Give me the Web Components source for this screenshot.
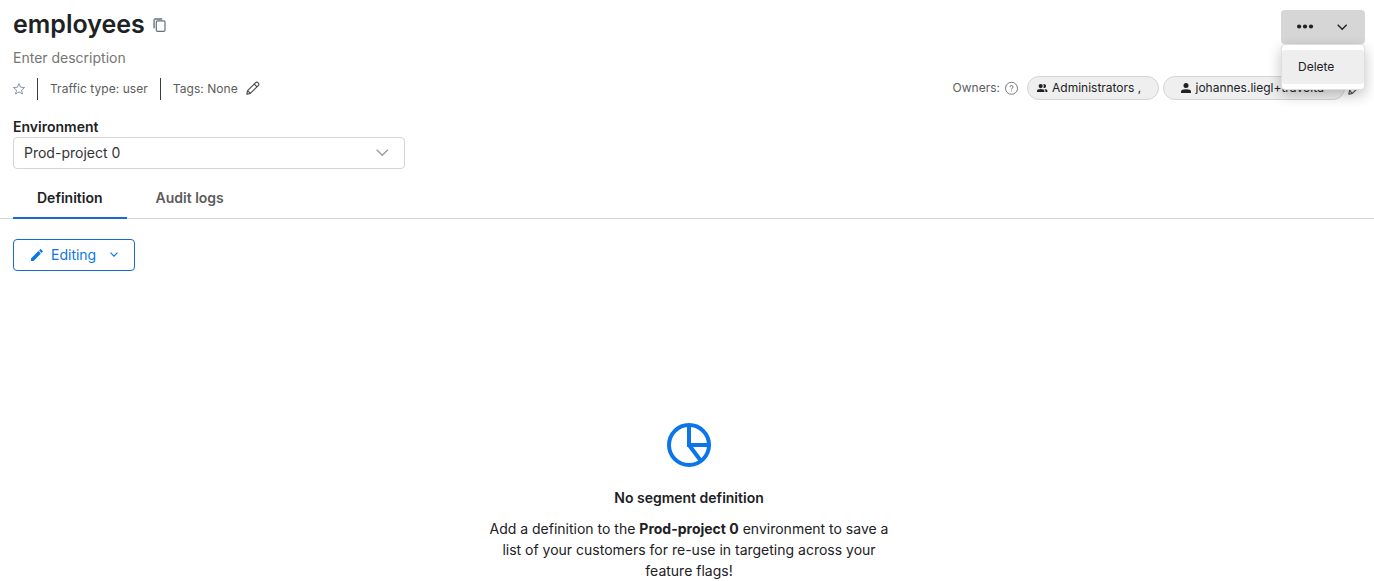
<!DOCTYPE html>
<html lang="en">
<head>
<meta charset="utf-8">
<title>employees</title>
<style>
body{margin:0;background:#fff;font-family:Inter,"Liberation Sans",sans-serif;color:#202124;overflow:hidden}
</style>
</head>
<body>
<segment-page></segment-page>
<script>
const define = (name, html) => customElements.define(name, class extends HTMLElement {
  constructor() {
    super();
    const t = document.createElement('template');
    t.innerHTML = html;
    this.attachShadow({mode: 'open'}).append(t.content.cloneNode(true));
  }
});

const icons = {
  copy: '<g fill="none" stroke="#5f7080" stroke-width="1.2"><path d="M1.1 10.3V2.6Q1.1 1 2.7 1H9.2" opacity=".75" stroke-width="1.8"/><rect x="3.3" y="2.8" width="8.7" height="10.6" rx="1.4"/></g>',
  star: '<path d="M7 1.6 8.5 5.2 12.6 5.5 9.5 8.1 10.5 12 7 9.9 3.5 12 4.5 8.1 1.4 5.5 5.5 5.2Z" fill="none" stroke="#8994ab" stroke-width="1" stroke-linejoin="round"/>',
  pencil: '<path d="M.8 13.2 1.6 9.6 9.4 1.8Q10.8.4 12.2 1.8 13.6 3.2 12.2 4.6L4.4 12.4ZM8.2 3 11 5.8M1.6 9.6 4.4 12.4" fill="none" stroke="#4d4d4d" stroke-width="1.15" stroke-linejoin="round"/>',
  help: '<circle cx="6.5" cy="7.3" r="6" fill="none" stroke="#6b6b6b" stroke-width=".9"/><path d="M5 6Q5 4.5 6.5 4.5T8 5.9Q8 6.7 7.2 7.2 6.5 7.6 6.5 8.5M6.5 9.5V10.4" fill="none" stroke="#6b6b6b" stroke-width=".9"/>',
  group: '<path d="M3.7 0A2.1 2.1 0 1 1 3.7 4.2 2.1 2.1 0 1 1 3.7 0ZM0 8V6.9Q0 5 3.7 5T7.4 6.9V8ZM6.4.2A2 2 0 1 1 6.4 4Q7.2 2.1 6.4.2ZM7.2 5.1Q10.4 5.3 10.4 6.9V8H8.4V6.9Q8.4 5.8 7.2 5.1Z" fill="#202124"/>',
  person: '<circle cx="5" cy="2.5" r="2.5" fill="#202124"/><path d="M0 10V8.5Q0 6.2 5 6.2T10 8.5V10Z" fill="#202124"/>',
  dots: '<g fill="#202124"><circle cx="2.1" cy="2.5" r="2.1"/><circle cx="8" cy="2.5" r="2.1"/><circle cx="14" cy="2.5" r="2.1"/></g>',
  chevron: '<path d="M.7.8 5.2 5.3 9.7.8" fill="none" stroke="#202124" stroke-width="1.4"/>',
  select: '<path d="M.7.7 6.3 6.3 11.9.7" fill="none" stroke="#9a9fa4" stroke-width="1.5"/>',
  small: '<path d="M.5.6 4 4.1 7.5.6" fill="none" stroke="#0b75ea" stroke-width="1.2"/>',
  edit: '<path d="M0 12V9.5L7.4 2.1 9.9 4.6 2.5 12ZM8.1 1.4 9.2.3Q9.6-.1 10 .3L11.7 2Q12.1 2.4 11.7 2.8L10.6 3.9Z" fill="#0b75ea"/>',
  pie: '<g fill="none" stroke="#0b75ea" stroke-width="4"><circle cx="22" cy="22" r="20"/><path d="M22 2V22H42M22 22 34 38"/></g>'
};
customElements.define('ui-icon', class extends HTMLElement {
  constructor() { super(); this.attachShadow({mode: 'open'}); }
  connectedCallback() {
    const [w, h] = this.getAttribute('size').split(' ');
    this.shadowRoot.innerHTML = `<style>:host{display:block;flex:none}svg{display:block;overflow:visible}</style><svg width="${w}" height="${h}" viewBox="0 0 ${w} ${h}">${icons[this.getAttribute('name')]}</svg>`;
  }
});

define('owner-pill', `<style>
:host{display:flex;box-sizing:border-box;height:24px;border:1px solid #d5d5d5;border-radius:12px;background:#efefef;align-items:center;color:#202124;font-size:12px;line-height:22px;white-space:pre}
</style><slot></slot>`);

define('action-menu', `<style>
:host{display:block;position:relative;width:84px;height:34px}
.btn{display:flex;box-sizing:border-box;height:34px;align-items:center;background:#d6d6d6;border-radius:4px;padding:0 18px 1px 16px;justify-content:space-between}
.menu{position:absolute;z-index:5;top:34px;left:0;box-sizing:border-box;width:84px;height:46px;border:1px solid #dedede;border-radius:4px;background:#fff;padding:5px 0;box-shadow:0 5px 14px rgba(0,0,0,.24)}
.item{height:34px;line-height:34px;padding-left:16px;background:#eee;border-radius:3px;font-size:12px}
</style><div class="btn"><ui-icon name="dots" size="16 5"></ui-icon><ui-icon name="chevron" size="10.4 6"></ui-icon></div><div class="menu"><div class="item">Delete</div></div>`);

define('segment-header', `<style>
:host{display:block;padding:0 9px 0 13px}
.top{display:flex;height:48px;justify-content:space-between}
h1{margin:0;font-size:25px;font-weight:600;line-height:48px}
.title{display:flex;gap:8px}.title ui-icon{margin-top:18px}
action-menu{margin-top:10px}
.desc{font-size:14px;line-height:20px;color:#757575}
.meta{display:flex;height:24px;margin-top:8px;align-items:center;font-size:12px;color:#5c5c5c;line-height:22px;white-space:nowrap}
.bar{width:1px;height:22px;background:#3c3c3c;margin-top:2px}
.meta span{padding-top:1px;letter-spacing:.05px}
.owners{display:flex;margin-left:auto;align-items:center}
</style>
<div class="top"><div class="title"><h1>employees</h1><ui-icon name="copy" size="13 14"></ui-icon></div><action-menu></action-menu></div>
<div class="desc">Enter description</div>
<div class="meta">
<ui-icon name="star" size="14 14" style="margin:2px 11px 0 -1px"></ui-icon><div class="bar"></div>
<span style="margin:0 12px">Traffic type: user</span><div class="bar"></div>
<span style="margin:0 8px 0 12px">Tags: None</span><ui-icon name="pencil" size="14 14"></ui-icon>
<div class="owners"><div>Owners:</div><ui-icon name="help" size="14 14" style="margin:0 8px 0 5px"></ui-icon>
<owner-pill style="width:132px;padding-left:9px"><ui-icon name="group" size="11 8" style="margin-right:4px"></ui-icon>Administrators ,</owner-pill>
<owner-pill style="width:182px;margin-left:4px;padding-left:17px"><ui-icon name="person" size="10 10" style="margin-right:4.5px"></ui-icon>johannes.liegl+travolta</owner-pill>
<ui-icon name="pencil" size="14 14" style="margin:0 3px"></ui-icon></div></div>`);

define('environment-select', `<style>
:host{display:block;margin:17px 0 0 13px;width:392px}
label{display:block;font-size:14px;font-weight:600;line-height:20px}
.box{display:flex;box-sizing:border-box;height:32px;border:1px solid #d5d5d5;border-radius:4px;align-items:center;justify-content:space-between;padding:0 15px 2px 10px;font-size:14px;color:#333}
</style><label>Environment</label><div class="box"><span>Prod-project 0</span><ui-icon name="select" size="12.6 7"></ui-icon></div>`);

define('tab-bar', `<style>
:host{display:flex;box-sizing:border-box;height:40px;margin-top:10px;padding-left:13px;border-bottom:1px solid #d5d5d5;font-size:14px;font-weight:600;line-height:38px;color:#5c5c5c}
div{box-sizing:border-box;height:40px;padding:0 24px}
.on{width:114px;border-bottom:2px solid #1868db;color:#202124;margin-right:4.5px;white-space:nowrap}
</style><div class="on">Definition</div><div>Audit logs</div>`);

define('editing-button', `<style>
:host{display:flex;box-sizing:border-box;width:122px;height:32px;margin:20px 0 0 13px;border:1px solid #1868db;border-radius:4px;align-items:center;padding:0 16px 0 17px;color:#0b75ea;font-size:14px}
span{padding-bottom:2px}
</style><ui-icon name="edit" size="12 12" style="margin-right:8px"></ui-icon><span>Editing</span><ui-icon name="small" size="8 5" style="margin:-2px 0 0 auto"></ui-icon>`);

define('empty-state', `<style>
:host{display:flex;flex-direction:column;align-items:center;margin:152px 0 0 4px;text-align:center;font-size:14px;line-height:21px}
h2{font-size:14px;font-weight:600;line-height:21px;margin:20px 0 10px}
p{margin:0;width:410px}b{font-weight:700}
</style><ui-icon name="pie" size="44 44"></ui-icon><h2>No segment definition</h2><p>Add a definition to the <b>Prod-project 0</b> environment to save a<br>list of your customers for re-use in targeting across your<br>feature flags!</p>`);

define('segment-page', `<style>:host{display:block;height:581px;overflow:hidden}</style>
<segment-header></segment-header><environment-select></environment-select><tab-bar></tab-bar><editing-button></editing-button><empty-state></empty-state>`);
</script>
</body>
</html>
